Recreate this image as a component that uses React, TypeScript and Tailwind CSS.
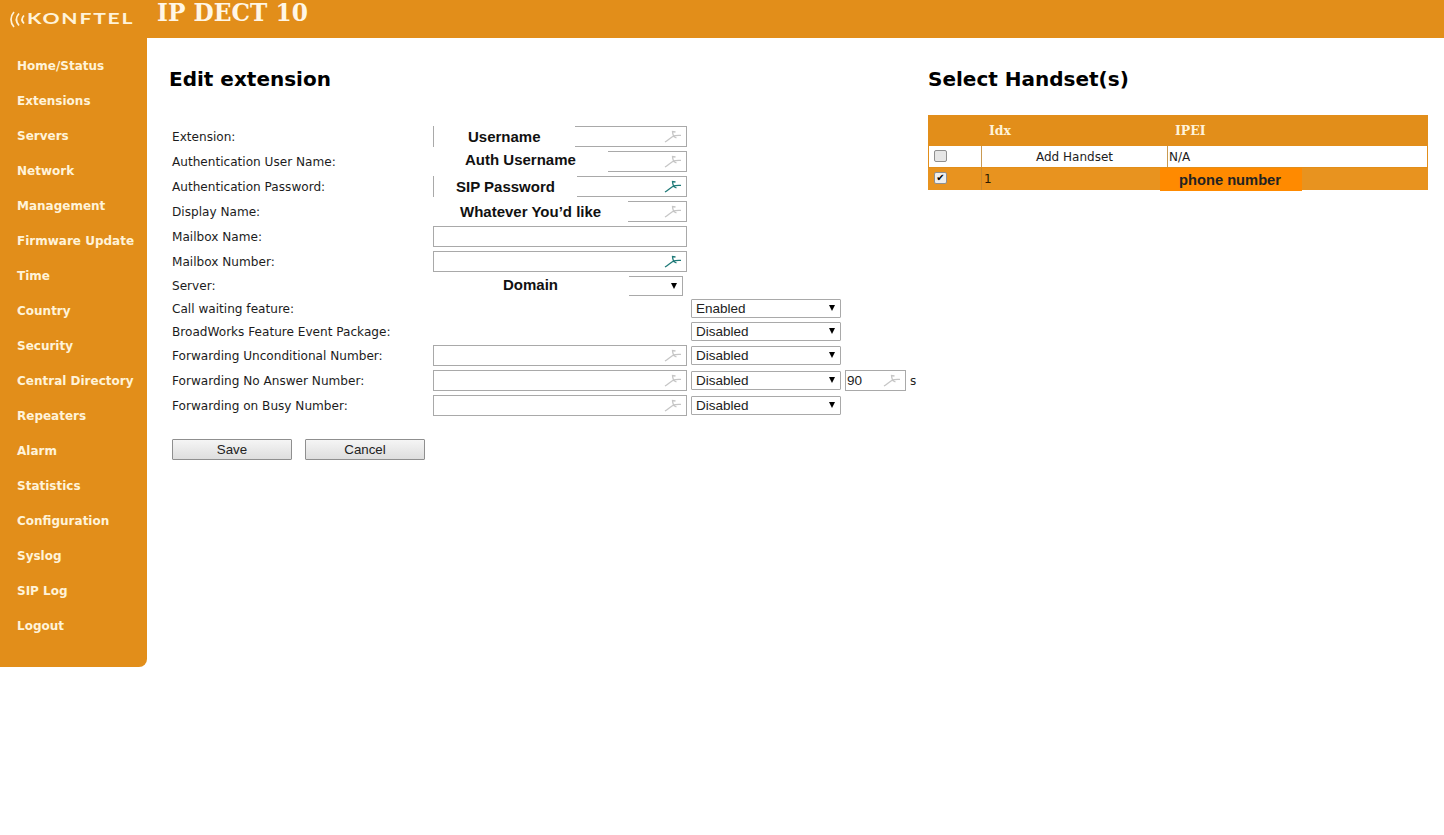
const V = '[font-family:"DejaVu_Sans",sans-serif]';

function Wrench({ teal }: { teal?: boolean }) {
  return (
    <svg width="18" height="13" viewBox="0 0 18 13" className="absolute right-[4px] top-[3px]" fill="none" stroke={teal ? "#1f7a78" : "#c6c6c6"} strokeWidth="1.3">
      <path d="M1 12C4 10 7 7.5 9.5 6C12 5.5 15 5.5 17 5.3M9.5 6C9 4.5 8.5 3 8.5 1.5L11.5 2M9.5 6.5L12.5 8" />
    </svg>
  );
}

function Field({ w = 254, icon, teal, value, label, coverW, textX, coverClass }: { w?: number; icon?: boolean; teal?: boolean; value?: string; label?: string; coverW?: number; textX?: number; coverClass?: string }) {
  return (
    <div className="relative h-[21px] shrink-0 border border-[#a9a9a9] bg-white" style={{ width: w }}>
      {value && <span className="absolute left-[1px] top-[2px] font-['Liberation_Sans'] text-[13.5px] leading-[16px] text-[#222]">{value}</span>}
      {icon && <Wrench teal={teal} />}
      {label && (
        <div className={`absolute top-[-1px] h-[21px] whitespace-nowrap bg-white font-['Liberation_Sans'] text-[15px] font-bold text-[#111] ${coverClass}`} style={{ width: coverW, paddingLeft: textX }}>
          {label}
        </div>
      )}
    </div>
  );
}

function Sel({ w = 150, value }: { w?: number; value?: string }) {
  return (
    <div className="relative h-[19px] shrink-0 rounded-[1px] border border-[#a9a9a9] bg-white pl-[4px] font-['Liberation_Sans'] text-[13.5px] leading-[17px] text-[#222]" style={{ width: w }}>
      {value}
      <span className="absolute right-[5px] top-[5px] h-0 w-0 border-x-[3px] border-t-[6px] border-x-transparent border-t-black" />
    </div>
  );
}

const menu = ["Home/Status", "Extensions", "Servers", "Network", "Management", "Firmware Update", "Time", "Country", "Security", "Central Directory", "Repeaters", "Alarm", "Statistics", "Configuration", "Syslog", "SIP Log", "Logout"];

function Row({ label, h = 25, children }: { label: string; h?: number; children?: React.ReactNode }) {
  return (
    <div className="flex items-center" style={{ height: h }}>
      <div className="w-[261px] shrink-0 pt-[2px] text-[12.1px] text-[#1c1c1c]">{label}</div>
      <div className="flex items-center gap-[4px]">{children}</div>
    </div>
  );
}

export default function App() {
  return (
    <div className={`${V} h-[835px] w-[1444px] overflow-hidden bg-white`}>
      <header className="flex h-[38px] items-center bg-[#e28e1a]">
        <div className="flex w-[157px] items-center pl-[9px] text-[#fff3d9]">
          <svg width="18" height="17" viewBox="0 0 18 17" fill="none" stroke="#fff3d9" strokeWidth="1.7">
            <path d="M5 1C1 5.5 1 11.5 5 16M10 2.5C6.5 6.5 6.5 10.5 10 14.5M15 4.5C12.5 7 12.5 10 15 12.5" />
          </svg>
          <span className="origin-left scale-x-[1.46] font-['Lato'] text-[14.5px] font-bold leading-[18px] tracking-[1.2px]">KONFTEL</span>
        </div>
        <h1 className="mt-[-12px] text-[23.3px] font-bold leading-[24px] text-[#fff6e6] [font-family:'DejaVu_Serif',serif]">IP DECT 10</h1>
      </header>
      <div className="flex">
        <nav className="flex h-[629px] w-[147px] shrink-0 flex-col rounded-br-[8px] bg-[#e28e1a] pt-[10px]">
          {menu.map((m) => (
            <a key={m} className="flex h-[35px] shrink-0 items-center pl-[17px] text-[12px] font-bold whitespace-nowrap text-[#fff3d9]">{m}</a>
          ))}
        </nav>
        <main className="flex flex-1">
          <section className="w-[781px] shrink-0 pl-[22px] pt-[26px]">
            <h2 className="text-[20px] font-bold leading-[30px] text-black">Edit extension</h2>
            <div className="mt-[30px] pl-[3px]">
              <Row label="Extension:"><Field icon label="Username" coverW={141} textX={34} coverClass="left-0 leading-[21px]" /></Row>
              <Row label="Authentication User Name:"><Field icon label="Auth Username" coverW={175} textX={32} coverClass="left-[-1px] leading-[17px]" /></Row>
              <Row label="Authentication Password:"><Field icon teal label="SIP Password" coverW={143} textX={22} coverClass="left-0 leading-[21px]" /></Row>
              <Row label="Display Name:"><Field icon label="Whatever You’d like" coverW={195} textX={27} coverClass="left-[-1px] leading-[21px]" /></Row>
              <Row label="Mailbox Name:"><Field /></Row>
              <Row label="Mailbox Number:"><Field icon teal /></Row>
              <Row label="Server:" h={23}>
                <div className="relative h-[20px] w-[250px]">
                  <div className="absolute left-0 top-0 h-[20px] w-[196px] bg-white pl-[70px] font-['Liberation_Sans'] text-[15px] font-bold leading-[18px] text-[#111]">Domain</div>
                  <div className="absolute left-[196px] top-0 h-[20px] w-[54px] border-y border-r border-[#a9a9a9]">
                    <span className="absolute right-[5px] top-[6px] h-0 w-0 border-x-[3px] border-t-[6px] border-x-transparent border-t-black" />
                  </div>
                </div>
              </Row>
              <Row label="Call waiting feature:" h={23}><div className="w-[254px]" /><Sel value="Enabled" /></Row>
              <Row label="BroadWorks Feature Event Package:" h={23}><div className="w-[254px]" /><Sel value="Disabled" /></Row>
              <Row label="Forwarding Unconditional Number:"><Field icon /><Sel value="Disabled" /></Row>
              <Row label="Forwarding No Answer Number:"><Field icon /><Sel value="Disabled" /><Field w={61} icon value="90" /><span className="text-[12px] text-[#222]">s</span></Row>
              <Row label="Forwarding on Busy Number:"><Field icon /><Sel value="Disabled" /></Row>
              <div className="mt-[21px] flex gap-[13px]">
                <button className="h-[21px] w-[120px] rounded-[1px] border border-[#8f8f8f] bg-gradient-to-b from-[#f5f5f5] to-[#dedede] font-['Liberation_Sans'] text-[13.3px] leading-[17px] text-[#222]">Save</button>
                <button className="h-[21px] w-[120px] rounded-[1px] border border-[#8f8f8f] bg-gradient-to-b from-[#f5f5f5] to-[#dedede] font-['Liberation_Sans'] text-[13.3px] leading-[17px] text-[#222]">Cancel</button>
              </div>
            </div>
          </section>
          <section className="w-[500px] shrink-0 pt-[26px]">
            <h2 className="text-[20px] font-bold leading-[30px] text-black">Select Handset(s)</h2>
            <div className="mt-[21px] w-[500px] bg-[#e28e1a]">
              <div className="flex h-[31px] items-center pt-[2px] text-[12.5px] font-bold text-[#fff3d9] [font-family:'DejaVu_Serif',serif]">
                <span className="w-[53px]" />
                <span className="w-[186px] pl-[8px]">Idx</span>
                <span className="pl-[8px]">IPEI</span>
              </div>
              <div className="mx-[1px] flex h-[21px] items-center bg-white text-[12px] text-[#1c1c1c]">
                <div className="flex h-full w-[52px] items-center pb-[2px] pl-[5px]">
                  <span className="h-[12px] w-[13px] rounded-[2px] border border-[#8f8f8f] bg-[#e6e6e6]" />
                </div>
                <div className="flex h-full w-[187px] items-center justify-center border-x border-[#c99a52]">Add Handset</div>
                <div className="pl-[1px]">N/A</div>
              </div>
              <div className="relative mt-[1px] flex h-[22px] items-center bg-[#e8931f] text-[12px] text-[#2a1a00]">
                <div className="flex h-full w-[53px] items-center pb-[2px] pl-[6px]">
                  <span className="flex h-[12px] w-[13px] items-center justify-center rounded-[2px] border border-[#8f8f8f] bg-[#eee] text-[10px] leading-none text-black">✔</span>
                </div>
                <div className="flex h-full items-center border-l border-[#c98a30] pl-[2px]">1</div>
                <div className="absolute left-[232px] top-0 h-[23px] w-[142px] bg-[#ff8a00] pl-[19px] font-['Liberation_Sans'] text-[14.7px] font-bold leading-[25px] text-[#222]">phone number</div>
              </div>
            </div>
          </section>
        </main>
      </div>
    </div>
  );
}
